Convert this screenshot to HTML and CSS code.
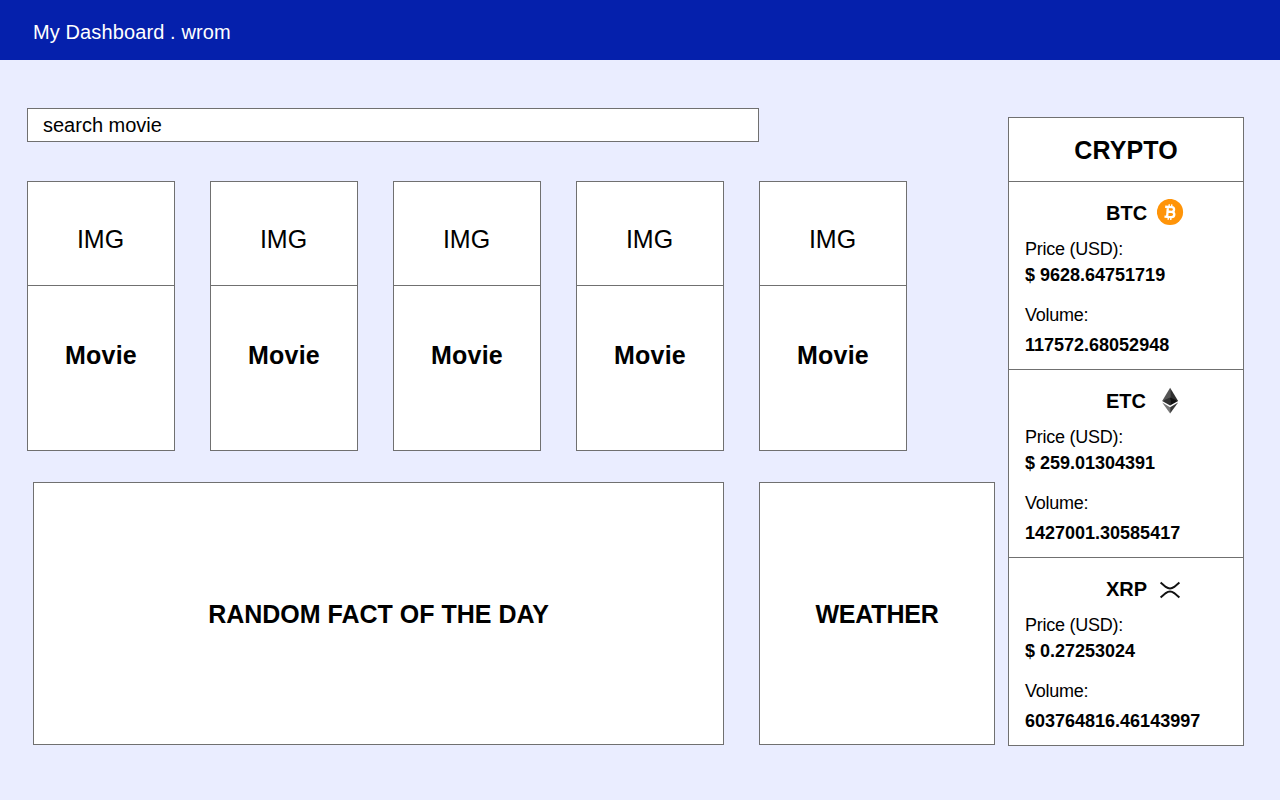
FILE: index.html
```html
<!DOCTYPE html>
<html lang="en">
<head>
<meta charset="utf-8">
<title>My Dashboard</title>
<link rel="stylesheet" href="styles.css">
</head>
<body>
<header class="topbar">My Dashboard . wrom</header>
<main class="dashboard">
  <div class="content">
    <input class="search" type="text" value="search movie" aria-label="search movie">
    <section class="movies">
      <article class="movie"><div class="movie-img">IMG</div><h2 class="movie-title">Movie</h2></article>
      <article class="movie"><div class="movie-img">IMG</div><h2 class="movie-title">Movie</h2></article>
      <article class="movie"><div class="movie-img">IMG</div><h2 class="movie-title">Movie</h2></article>
      <article class="movie"><div class="movie-img">IMG</div><h2 class="movie-title">Movie</h2></article>
      <article class="movie"><div class="movie-img">IMG</div><h2 class="movie-title">Movie</h2></article>
    </section>
    <section class="widgets">
      <h2 class="panel">RANDOM FACT OF THE DAY</h2>
      <h2 class="panel panel-weather">WEATHER</h2>
    </section>
  </div>
  <aside class="crypto">
    <h2 class="crypto-title">CRYPTO</h2>
    <section class="coin">
      <h3 class="coin-name"><span class="symbol">BTC</span>
        <svg class="coin-icon" viewBox="0 0 27 27"><circle cx="13" cy="13" r="13.1" fill="#ff9408"/><g fill="none" stroke="#fff" transform="translate(-.2 -.4) rotate(4 13.5 13.5)"><path stroke-width="2.3" d="M10.7 8.4v10M8 8.5h6.6c3.3 0 3.3 4.6 0 4.6h-3.7M14.6 13.1c4.1 0 4.1 5.3 0 5.3H8"/><path stroke-width="1.4" d="M11.9 5.7v3M14.5 5.7v3M11.9 18.3v3M14.5 18.3v3"/></g></svg>
      </h3>
      <p class="label">Price (USD):</p><p class="value price">$ 9628.64751719</p>
      <p class="label">Volume:</p><p class="value volume">117572.68052948</p>
    </section>
    <section class="coin">
      <h3 class="coin-name"><span class="symbol">ETC</span>
        <svg class="coin-icon" viewBox="0 0 27 27"><path fill="#555" d="M13.1 .7v11.8L5.2 13.9z"/><path fill="#303030" d="M13.1 .7v11.8l8 1.4z"/><path fill="#303030" d="M5.2 13.9l7.9-3.5v8.2z"/><path fill="#111" d="M21.1 13.9l-8-3.5v8.2z"/><path fill="#777" d="M5.2 15.6l7.9 4.7v6.1z"/><path fill="#383838" d="M21.1 15.6l-8 4.7v6.1z"/></svg>
      </h3>
      <p class="label">Price (USD):</p><p class="value price">$ 259.01304391</p>
      <p class="label">Volume:</p><p class="value volume">1427001.30585417</p>
    </section>
    <section class="coin">
      <h3 class="coin-name"><span class="symbol">XRP</span>
        <svg class="coin-icon" viewBox="0 0 27 27"><path fill="none" stroke="#111" stroke-width="2" d="M3.6 7.6l5.2 4.3q4.2 3.2 8.4 0l5.2-4.3M3.6 22.4l5.2-4.3q4.2-3.2 8.4 0l5.2 4.3"/></svg>
      </h3>
      <p class="label">Price (USD):</p><p class="value price">$ 0.27253024</p>
      <p class="label">Volume:</p><p class="value volume">603764816.46143997</p>
    </section>
  </aside>
</main>
</body>
</html>
```
FILE: styles.css
```css
* { box-sizing: border-box; }
body {
  margin: 0;
  min-height: 800px;
  background: #eaedff;
  color: #000;
  font-family: "Liberation Sans", Arial, sans-serif;
}
h2, h3, p { margin: 0; }
.topbar {
  height: 60px;
  padding: 4px 33px 0;
  background: #0520ac;
  color: #fff;
  font-size: 20px;
  line-height: 56px;
  letter-spacing: 0.11px;
}
.dashboard {
  display: grid;
  grid-template-columns: 968px 236px;
  column-gap: 13px;
  align-items: start;
  padding: 48px 0 0 27px;
}
.search {
  display: block;
  width: 732px;
  height: 34px;
  padding: 0 15px;
  border: 1px solid #707070;
  background: #fff;
  color: #000;
  font: 20px "Liberation Sans", Arial, sans-serif;
}
.movies {
  display: grid;
  grid-template-columns: repeat(5, 148px);
  column-gap: 35px;
  margin-top: 39px;
}
.movie {
  height: 270px;
  border: 1px solid #707070;
  background: #fff;
  font-size: 25px;
}
.movie-img {
  display: flex;
  align-items: center;
  justify-content: center;
  height: 104px;
  padding: 11px 1px 0 0;
  border-bottom: 1px solid #707070;
}
.movie-title {
  height: 164px;
  padding-bottom: 25px;
  display: flex;
  align-items: center;
  justify-content: center;
  font-size: 25px;
  letter-spacing: 0.2px;
}
.widgets {
  display: grid;
  grid-template-columns: 691px 236px;
  column-gap: 35px;
  margin: 31px 0 0 6px;
}
.panel {
  display: flex;
  align-items: center;
  justify-content: center;
  height: 263px;
  padding-top: 1px;
  border: 1px solid #707070;
  background: #fff;
  font-size: 25px;
}
.panel-weather { letter-spacing: -0.2px; }
.crypto {
  margin-top: 9px;
  border: 1px solid #707070;
  background: #fff;
}
.crypto-title {
  height: 63px;
  font-size: 25px;
  line-height: 64px;
  text-align: center;
  letter-spacing: 0.1px;
}
.coin {
  height: 188px;
  padding: 17px 16px 0;
  border-top: 1px solid #707070;
}
.coin-name {
  display: flex;
  align-items: center;
  height: 27px;
  padding-left: 81px;
  font-size: 20px;
}
.symbol {
  width: 51px;
  padding-top: 2px;
}
.coin-icon { width: 27px; height: 27px; flex: none; }
.label, .value {
  font-size: 18px;
  line-height: 26px;
}
.label {
  padding-top: 10px;
  letter-spacing: -0.25px;
}
.value { font-weight: bold; }
.price { margin-bottom: 4px; }
.volume { padding-top: 4px; }
```
